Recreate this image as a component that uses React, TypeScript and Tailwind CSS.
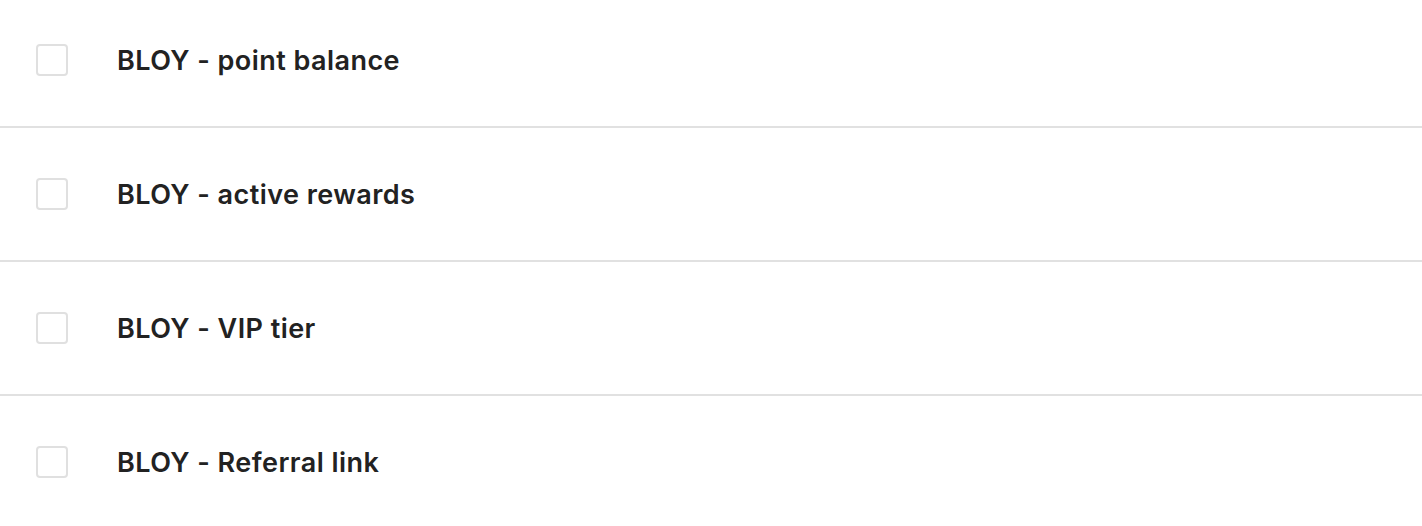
import React from 'react';

const items = [
  'BLOY - point balance',
  'BLOY - active rewards',
  'BLOY - VIP tier',
  'BLOY - Referral link',
];

const Row: React.FC<{ label: string; last?: boolean }> = ({ label, last }) => (
  <div
    className={`flex items-center h-[132px] box-content ${last ? '' : 'border-b-2 border-[#e1e1e1]'}`}
  >
    <div className="w-[117px] pl-[36px] flex-shrink-0">
      <div className="w-[32px] h-[32px] rounded-[4px] border-2 border-[#e0e0e0] bg-white" />
    </div>
    <span className="pt-[2px] text-[27px] font-semibold text-[#222222] tracking-[0.45px]">{label}</span>
  </div>
);

export default function App() {
  return (
    <div
      className="w-[1422px] h-[526px] overflow-hidden bg-white"
      style={{ fontFamily: 'Inter, "Noto Sans", sans-serif' }}
    >
      <div className="-mt-[6px]">
        {items.map((label, i) => (
          <Row key={label} label={label} last={i === items.length - 1} />
        ))}
      </div>
    </div>
  );
}
